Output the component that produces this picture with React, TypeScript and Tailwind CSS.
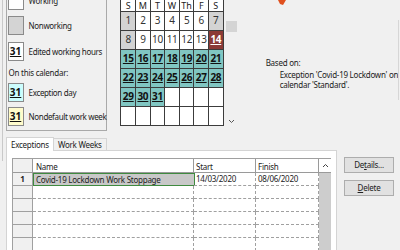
import React from 'react';

const weeks: (number | null)[][] = [
  [1, 2, 3, 4, 5, 6, 7],
  [8, 9, 10, 11, 12, 13, 14],
  [15, 16, 17, 18, 19, 20, 21],
  [22, 23, 24, 25, 26, 27, 28],
  [29, 30, 31, null, null, null, null],
  [null, null, null, null, null, null, null],
];

function dayClass(d: number | null) {
  if (d === null) return 'bg-white';
  if (d === 1 || d === 7 || d === 8) return 'bg-[#d3d3d3] text-[#333]';
  if (d === 14) return 'bg-[#8b3a36] text-white font-bold underline';
  if (d >= 15) return 'bg-[#80c6c2] text-[#111] font-bold underline';
  return 'bg-white text-[#333]';
}

function Swatch({ bg, label, mark }: { bg: string; label: string; mark?: boolean }) {
  return (
    <div className="flex items-center h-[19px]">
      <div className={`w-[16px] h-[19px] shrink-0 border border-[#8a8a8a] ${bg} flex justify-center pt-[2px]`}>
        {mark && <span className="text-[10px] leading-[12px] font-bold underline text-[#111] tracking-normal">31</span>}
      </div>
      <span className="ml-[5px] text-[#222] whitespace-nowrap tracking-[-0.35px]">{label}</span>
    </div>
  );
}

export default function App() {
  const heads = ['S', 'M', 'T', 'W', 'Th', 'F', 'S'];
  return (
    <div className="w-[400px] h-[250px] bg-[#f0f0f0] overflow-hidden flex flex-col font-['Noto_Sans',sans-serif] text-[8px] leading-[10px] tracking-[-0.25px] text-[#222]">
      {/* top: legend + calendar + info */}
      <div className="h-[131px] flex shrink-0">
        <div className="w-[2px]" />
        <div className="w-px bg-[#c9c9c9]" />
        <div className="w-[4px]" />
        {/* legend box */}
        <div className="w-[102px] border-l border-r border-b border-[#a9a9a9] pl-[1px] -mt-[9px] h-[140px] flex flex-col">
          <Swatch bg="bg-white" label="Working" />
          <div className="h-[6px]" />
          <Swatch bg="bg-[#d4d4d4]" label="Nonworking" />
          <div className="h-[7px]" />
          <Swatch bg="bg-white" label="Edited working hours" mark />
          <div className="h-[7px]" />
          <div className="h-[9px] pl-[1px] whitespace-nowrap">On this calendar:</div>
          <div className="h-[6px]" />
          <Swatch bg="bg-[#ccfdfd]" label="Exception day" mark />
          <div className="h-[5px]" />
          <Swatch bg="bg-[#fffccc]" label="Nondefault work week" mark />
        </div>

        {/* calendar */}
        <div className="ml-[13px] bg-[#3c3c3c] px-px pb-px self-start grid grid-cols-[repeat(7,13.6px)] gap-px tracking-normal">
          {heads.map((h, i) => (
            <div key={i} className="bg-white h-[11px] flex justify-center items-end text-[9px] leading-[11px] text-[#222]">
              {h}
            </div>
          ))}
          {weeks.flat().map((d, i) => (
            <div key={i} className={`h-[18px] flex justify-center pt-[2px] text-[10px] leading-[12px] tracking-[-0.3px] ${dayClass(d)}`}>
              {d ?? ''}
            </div>
          ))}
        </div>

        {/* calendar scroll */}
        <div className="ml-[2px] w-[11px] flex flex-col items-center">
          <div className="mt-[21px] w-[11px] h-[11px] bg-[#d4d4d4]" />
          <div className="flex-1" />
          <svg width="7" height="5" viewBox="0 0 7 5" className="mb-[7px]">
            <path d="M1 1 L3.5 3.5 L6 1" stroke="#555" strokeWidth="1" fill="none" />
          </svg>
        </div>

        {/* info */}
        <div className="flex-1 flex flex-col pl-[29px] whitespace-nowrap">
          <div className="h-[58px] pl-[12px]">
            <svg width="8" height="5" viewBox="0 0 8 5">
              <path d="M0 0 L8 0 L5 5 L2 4 Z" fill="#e0501e" />
            </svg>
          </div>
          <div>Based on:</div>
          <div className="pl-[14px] mt-[2px] leading-[10px]">
            <div>Exception 'Covid-19 Lockdown' on</div>
            <div>calendar 'Standard'.</div>
          </div>
        </div>
        <div className="w-px mt-[20px] h-[80px] bg-[#d6d6d6] mr-[1px]" />
      </div>

      {/* bottom: tabs + table + buttons */}
      <div className="flex pl-[2px]">
        <div className="w-px bg-[#c9c9c9] h-[30px]" />
        <div className="w-[3px]" />
        <div className="flex flex-col mt-[6px]">
          <div className="flex items-end h-[13px]">
            <div className="h-[14px] px-[4px] bg-white border-t border-l border-r border-[#d4d4d4] flex items-center -mb-px relative">
              Exceptions
            </div>
            <div className="h-[12px] px-[4px] border-t border-r border-[#d4d4d4] flex items-center">Work Weeks</div>
          </div>
          <div className="w-[331px] h-[120px] bg-white border border-[#d4d4d4] pl-[5px] pt-[7px]">
            <div className="grid grid-cols-[20px_161px_62px_63px_12px] border-l border-t border-[#a0a0a0] w-[319px]">
              <div className="h-[14px] bg-[#f0f0f0] border-r border-b border-[#9a9a9a]" />
              <div className="h-[14px] border-r border-b border-[#9a9a9a] flex items-end pl-[3px]">Name</div>
              <div className="h-[14px] border-r border-b border-[#9a9a9a] flex items-end pl-[2px]">Start</div>
              <div className="h-[14px] border-r border-b border-[#9a9a9a] flex items-end pl-[2px]">Finish</div>
              <div className="h-[14px] border-b border-[#9a9a9a] flex justify-center items-center">
                <svg width="7" height="5" viewBox="0 0 7 5">
                  <path d="M1 4 L3.5 1.5 L6 4" stroke="#444" strokeWidth="1" fill="none" />
                </svg>
              </div>

              <div className="h-[13px] bg-[#f0f0f0] border-r border-b border-[#a0a0a0] flex items-center justify-center font-bold">1</div>
              <div className="h-[13px] bg-[#c8c8c8] border border-[#3f8a3f] flex items-center pl-[2px] -mr-px">
                Covid-19 Lockdown Work Stoppage
              </div>
              <div className="h-[13px] border-r border-b border-dashed border-[#a0a0a0] flex items-center pl-[2px]">14/03/2020</div>
              <div className="h-[13px] border-r border-b border-dashed border-[#a0a0a0] flex items-center pl-[2px]">08/06/2020</div>
              <div className="row-span-6 bg-[#cdcdcd]" />

              {[0, 1, 2, 3, 4].map((r) => (
                <React.Fragment key={r}>
                  <div className="h-[13px] bg-[#f0f0f0] border-r border-b border-[#a0a0a0]" />
                  <div className="h-[13px] border-r border-b border-dashed border-[#a0a0a0]" />
                  <div className="h-[13px] border-r border-b border-dashed border-[#a0a0a0]" />
                  <div className="h-[13px] border-r border-b border-dashed border-[#a0a0a0]" />
                </React.Fragment>
              ))}
            </div>
          </div>
        </div>
        <div className="ml-[7px] mt-[26px] flex flex-col gap-[7px]">
          <button className="w-[50px] h-[16px] bg-[#e1e1e1] border border-[#adadad] flex items-center justify-center text-[8px] text-[#222]">
            De<span className="underline">t</span>ails...
          </button>
          <button className="w-[50px] h-[16px] bg-[#e1e1e1] border border-[#adadad] flex items-center justify-center text-[8px] text-[#222]">
            <span className="underline">D</span>elete
          </button>
        </div>
      </div>
    </div>
  );
}
